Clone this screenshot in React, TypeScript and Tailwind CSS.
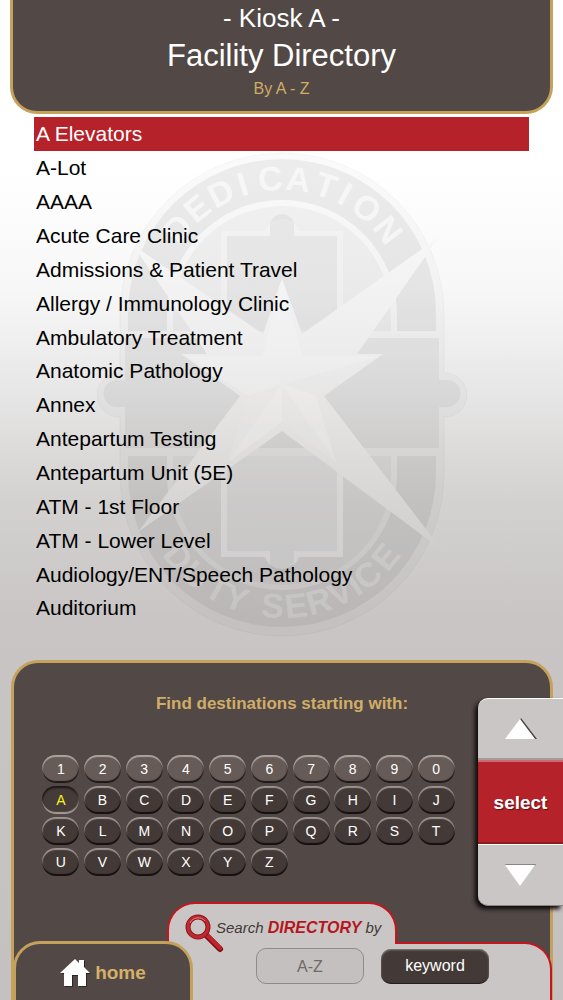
import { useState } from "react"

const DESTINATIONS = [
  "A Elevators",
  "A-Lot",
  "AAAA",
  "Acute Care Clinic",
  "Admissions & Patient Travel",
  "Allergy / Immunology Clinic",
  "Ambulatory Treatment",
  "Anatomic Pathology",
  "Annex",
  "Antepartum Testing",
  "Antepartum Unit (5E)",
  "ATM - 1st Floor",
  "ATM - Lower Level",
  "Audiology/ENT/Speech Pathology",
  "Auditorium",
]

const DIGITS = "1234567890".split("")
const LETTERS = "ABCDEFGHIJKLMNOPQRSTUVWXYZ".split("")

/* Letter and its angle on the emblem ring, in degrees */
const TOP_MOTTO: [string, number][] = [
  ["D", -51],
  ["E", -39],
  ["D", -27],
  ["I", -17],
  ["C", -5],
  ["A", 7],
  ["T", 19],
  ["I", 28],
  ["O", 39],
  ["N", 52],
]

const BOTTOM_MOTTO: [string, number][] = [
  ["D", 51],
  ["U", 40],
  ["T", 29],
  ["Y", 20],
  ["S", 4],
  ["E", -6],
  ["R", -16],
  ["V", -26],
  ["I", -33],
  ["C", -40],
  ["E", -51],
]

function Emblem() {
  return (
    <svg
      className="pointer-events-none absolute top-[150px] left-1/2 h-[490px] w-[370px] -translate-x-1/2"
      viewBox="97 150 370 490"
      aria-hidden="true"
    >
      <defs>
        <linearGradient id="star" gradientUnits="userSpaceOnUse" x1="0" y1="237" x2="0" y2="550">
          <stop offset="0" stopColor="#f7f7f7" />
          <stop offset=".35" stopColor="#eeeded" />
          <stop offset=".55" stopColor="#e5e4e3" />
          <stop offset=".75" stopColor="#dbdad9" />
          <stop offset="1" stopColor="#d0cecd" />
        </linearGradient>
      </defs>
      {/* outer plate with the side knobs */}
      <path
        d="M120 315A162 162 0 0 1 444 315V373H445A22 22 0 0 1 445 417H444V474A162 162 0 0 1 120 474V417H119A22 22 0 0 1 119 373H120Z"
        fill="#000"
        fillOpacity=".018"
        stroke="#000"
        strokeOpacity=".03"
      />
      {/* ring */}
      <path
        d="M128 331V313A154 154 0 0 1 436 313V331H397V315A115 115 0 0 0 167 315V331Z"
        fill="#000"
        fillOpacity=".055"
      />
      <path
        d="M128 456V473A154 154 0 0 0 436 473V456H397V475A115 115 0 0 1 167 475V456Z"
        fill="#000"
        fillOpacity=".055"
      />
      {/* inner field */}
      <path
        d="M173 331V315A109 109 0 0 1 391 315V331ZM173 456V476A109 109 0 0 0 391 476V456Z"
        fill="#000"
        fillOpacity=".03"
      />
      {/* cross */}
      <path
        d="M221 338V231H265A18 18 0 0 1 299 231H343V338ZM221 448V557H265A18 18 0 0 0 299 557H343V448Z"
        fill="#fff"
        fillOpacity=".25"
      />
      <path
        d="M227 338V236H270V226A12 12 0 0 1 294 226V236H337V338H439V380H447A13 13 0 0 1 447 407H439V448H337V551H294V562A12 12 0 0 1 270 562V551H227V448H125V407H117A13 13 0 0 1 117 380H125V338Z"
        fill="#000"
        fillOpacity=".045"
      />
      <g
        fill="#fff"
        fillOpacity=".6"
        fontFamily="'Liberation Sans', Arial, sans-serif"
        fontWeight="700"
        fontSize="34"
        textAnchor="middle"
      >
        {TOP_MOTTO.map(([letter, angle]) => (
          <text key={angle} x="282" y="190" transform={`rotate(${angle} 282 313)`}>
            {letter}
          </text>
        ))}
      </g>
      <g
        fill="#fff"
        fillOpacity=".2"
        fontFamily="'Liberation Sans', Arial, sans-serif"
        fontWeight="700"
        fontSize="34"
        textAnchor="middle"
      >
        {BOTTOM_MOTTO.map(([letter, angle]) => (
          <text key={angle} x="282" y="618" transform={`rotate(${angle} 282 473)`}>
            {letter}
          </text>
        ))}
      </g>
      {/* star */}
      <path
        d="M282 278L302 334L439 237L357 354H383L324 396L442 550L282 431L138 532L240 396L181 354H207L133 245L263 334Z"
        fill="url(#star)"
      />
      <path
        d="M282 280L302 356H380L316 396L336 462L282 422L228 462L248 396L186 356H262Z"
        fill="#fff"
        fillOpacity=".16"
      />
      <path
        d="M282 384L336 462L282 422ZM282 384L380 356L316 396ZM282 384L228 462L248 396Z"
        fill="#000"
        fillOpacity=".012"
      />
    </svg>
  )
}

type KeyProps = {
  label: string
  active: boolean
  digit?: boolean
  onPress: (label: string) => void
}

function Key({ label, active, digit, onPress }: KeyProps) {
  const look = active
    ? "bg-[#453b38] text-[#f8f21c] shadow-[inset_0_2px_2px_#1c1716,inset_0_-2px_1px_#a39c99,inset_1px_0_1px_#2b2523,inset_-1px_0_1px_#6b6360]"
    : digit
      ? "bg-[#665b57] text-white shadow-[inset_0_2px_1px_#aaa3a0,inset_0_-2px_1px_#1d1817,inset_1px_0_1px_#8b827f,inset_-1px_0_1px_#3a3230]"
      : "bg-[#433a37] text-white shadow-[inset_0_2px_1px_#9b9491,inset_0_-2px_1px_#14100f,inset_1px_0_1px_#756c69,inset_-1px_0_1px_#2a2422]"

  return (
    <button
      type="button"
      aria-pressed={active}
      onClick={() => onPress(label)}
      className={`h-7 w-[37px] rounded-[14px] text-sm leading-7 ${look}`}
    >
      {label}
    </button>
  )
}

function ScrollControl({ onMove }: { onMove: (step: number) => void }) {
  return (
    <div className="absolute top-[38px] right-0 flex w-[85px] flex-col rounded-l-[10px] shadow-[-3px_3px_4px_#0d0a09]">
      <button
        type="button"
        aria-label="Up"
        onClick={() => onMove(-1)}
        className="flex h-[62px] items-center justify-center rounded-tl-[10px] border-t border-b-2 border-t-white border-b-[#a09c9b] bg-[#cac6c5]"
      >
        <svg width="32" height="23" viewBox="0 0 32 23">
          <path d="M16 1L32 22H30L15 3Z" fill="#4a4442" />
          <path d="M15 2L30 22H0Z" fill="#fff" />
        </svg>
      </button>
      <button
        type="button"
        className="h-[84px] border-t-2 border-b-2 border-t-[#cf6a70] border-b-[#8f1a21] bg-[#b5222a] pt-[2px] text-[19px] font-bold text-white [text-shadow:1px_1px_1px_#5c1013]"
      >
        select
      </button>
      <button
        type="button"
        aria-label="Down"
        onClick={() => onMove(1)}
        className="flex h-[62px] items-center justify-center rounded-bl-[10px] border-t border-b border-t-white border-b-[#8b8685] bg-[#cac6c5]"
      >
        <svg width="32" height="23" viewBox="0 0 32 23">
          <path d="M0 0H31L30 2H1Z" fill="#8b8685" />
          <path d="M0 1H30L15 22Z" fill="#fff" />
        </svg>
      </button>
    </div>
  )
}

function HomeIcon() {
  return (
    <svg className="drop-shadow-[1px_1px_0_#2b2423]" width="30" height="28" viewBox="0 0 30 28" aria-hidden="true">
      <path d="M15 0L19 4V1H24V8L30 14H26V27H18V16H12V27H4V14H0Z" fill="#fff" />
    </svg>
  )
}

function SearchIcon() {
  return (
    <svg className="mt-[2px] shrink-0 self-start" width="40" height="40" viewBox="0 0 40 40" fill="none" aria-hidden="true">
      <path d="M21 21L35 35" stroke="#7b1116" strokeWidth="6" strokeLinecap="round" />
      <path d="M22 21L35 34" stroke="#c2222b" strokeWidth="4" strokeLinecap="round" />
      <circle cx="13" cy="13" r="10" stroke="#8c1419" strokeWidth="5" />
      <circle cx="13" cy="13" r="10" stroke="#bd2831" strokeWidth="3" />
      <path d="M5 9A9 9 0 0 1 20 7" stroke="#e0808a" strokeWidth="1" />
    </svg>
  )
}

export default function App() {
  const [selected, setSelected] = useState(0)
  const [prefix, setPrefix] = useState("A")

  function handleMove(step: number) {
    setSelected((current) =>
      Math.min(DESTINATIONS.length - 1, Math.max(0, current + step))
    )
  }

  return (
    <div className="relative flex min-h-screen flex-col overflow-hidden bg-[linear-gradient(#fff_0%,#fff_17%,#f7f7f7_29%,#e8e7e7_39%,#dcdbda_45%,#d4d2d1_50%,#c8c5c4_62%,#c5c1c0_100%)] font-['Liberation_Sans',Arial,sans-serif]">
      <Emblem />

      <header className="relative mx-[10px] rounded-b-[27px] border-x-3 border-b-3 border-[#c5a25c] bg-[#524845] pb-2 text-center text-white">
        <p className="text-[26px] leading-[37px]">- Kiosk A -</p>
        <h1 className="text-[31px] leading-[37px]">Facility Directory</h1>
        <p className="text-[16px] leading-[29px] text-[#d0ad68]">By A - Z</p>
      </header>

      <main className="relative flex flex-1 flex-col px-[34px] pt-[3px] pb-[35px]">
        <ul className="flex flex-1 flex-col">
          {DESTINATIONS.map((name, index) => (
            <li key={name} className="flex flex-1">
              <button
                type="button"
                onClick={() => setSelected(index)}
                className={`flex w-full items-center pt-px pl-[2px] text-left text-[21px] leading-7 ${
                  index === selected ? "bg-[#b5222a] text-white" : "text-black"
                }`}
              >
                {name}
              </button>
            </li>
          ))}
        </ul>
      </main>

      <section className="relative flex h-[340px] flex-col">
        <div className="mr-[10px] ml-[11px] flex flex-1 flex-col rounded-t-[27px] border-x-3 border-t-3 border-[#c5a25c] bg-[#524845]">
          <h2 className="mt-[29px] text-center text-[17px] leading-[24px] font-bold text-[#d0ad68]">
            Find destinations starting with:
          </h2>
          <div className="mt-[39px] mr-[93px] ml-[26px] grid grid-cols-10 justify-items-center gap-y-[3px]">
            {DIGITS.map((digit) => (
              <Key key={digit} label={digit} digit active={prefix === digit} onPress={setPrefix} />
            ))}
            {LETTERS.map((letter) => (
              <Key key={letter} label={letter} active={prefix === letter} onPress={setPrefix} />
            ))}
          </div>

          {/* -------------------------- Bottom navigation -------------------------- */}
          <footer className="mt-auto -mr-[2px] -ml-px flex items-end">
            <a
              href="#home"
              className="relative z-20 flex h-[59px] w-[180px] items-center justify-center gap-[5px] rounded-t-[27px] border-x-3 border-t-3 border-[#c5a25c] bg-[#524845] pt-[2px] text-[19px] font-bold text-[#d4b069]"
            >
              <HomeIcon />
              home
            </a>
            <div className="-ml-[26px] flex flex-1 flex-col">
              <div className="relative z-10 -mb-[2px] flex h-[42px] w-[230px] items-center rounded-t-[28px] border-x-2 border-t-2 border-[#c4161f] bg-[#cac6c5] pt-2 pl-4">
                <SearchIcon />
                <p className="-ml-[9px] text-[15px] whitespace-nowrap text-[#433a37] italic">
                  Search <b className="text-[16px] text-[#b5161e]">DIRECTORY</b> by
                </p>
              </div>
              <div className="flex h-[58px] gap-[17px] rounded-tr-[27px] border-t-2 border-r-2 border-[#c4161f] bg-[#cac6c5] pt-1 pl-[89px]">
                <button
                  type="button"
                  className="h-9 w-[108px] rounded-[10px] border border-[#8f8b8a] bg-[#c4c0bf] pt-[2px] text-[16px] text-[#6f6967]"
                >
                  A-Z
                </button>
                <button
                  type="button"
                  className="mt-px h-[35px] w-[108px] rounded-[10px] bg-[#433a37] pb-[2px] text-[16px] text-white shadow-[inset_0_1px_2px_#8b8482,inset_0_-1px_1px_#1d1817]"
                >
                  keyword
                </button>
              </div>
            </div>
          </footer>
        </div>

        <ScrollControl onMove={handleMove} />
      </section>
    </div>
  )
}
